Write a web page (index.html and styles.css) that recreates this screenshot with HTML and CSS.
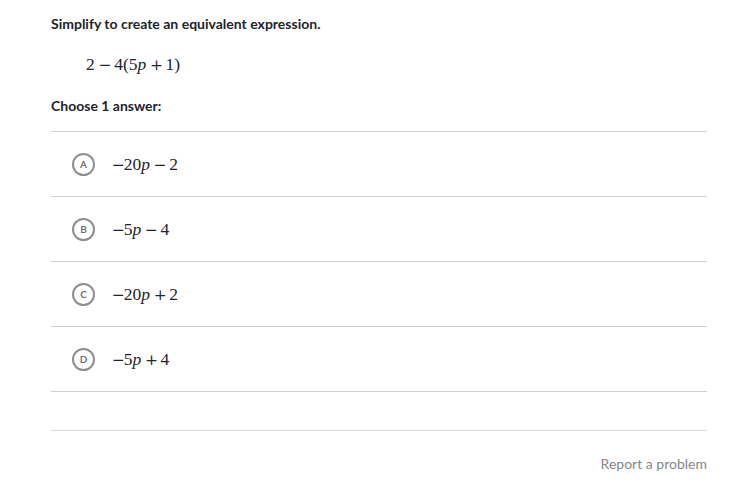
FILE: index.html
```html
<!DOCTYPE html>
<html>
<head>
<meta charset="utf-8">
<link rel="stylesheet" href="styles.css">
</head>
<body>
<div class="page">
  <div class="title">Simplify to create an equivalent expression.</div>
  <div class="expr m">2<span class="op">−</span>4(5<i>p</i><span class="op">+</span>1)</div>
  <div class="choose">Choose 1 answer:</div>
  <ul class="choices">
    <li class="choice"><span class="letter">A</span><span class="m"><span class="un">−</span>20<i>p</i><span class="op">−</span>2</span></li>
    <li class="choice"><span class="letter">B</span><span class="m"><span class="un">−</span>5<i>p</i><span class="op">−</span>4</span></li>
    <li class="choice"><span class="letter">C</span><span class="m"><span class="un">−</span>20<i>p</i><span class="op">+</span>2</span></li>
    <li class="choice"><span class="letter">D</span><span class="m"><span class="un">−</span>5<i>p</i><span class="op">+</span>4</span></li>
  </ul>
  <div class="spacer"></div>
  <div class="footer"><span class="report">Report a problem</span></div>
</div>
</body>
</html>
```
FILE: styles.css
```css
html, body {
  margin: 0;
  padding: 0;
  background: #fff;
}
.page {
  width: 656px;
  margin-left: 51px;
  padding-top: 14px;
  font-family: Lato, "Liberation Sans", sans-serif;
  color: #21242c;
}
.title {
  font-size: 14px;
  font-weight: bold;
  line-height: 20px;
  height: 20px;
}
.m {
  font-family: "Liberation Serif", "DejaVu Serif", serif;
  font-size: 17.5px;
  line-height: 22px;
  color: #21242c;
}
.m i {
  font-style: italic;
}
.op, .un {
  display: inline-block;
  width: 0.75em;
  text-align: center;
  font-family: "DejaVu Serif", serif;
  font-size: 15.5px;
  line-height: 22px;
}
.op {
  margin: 0 0.25em;
}
.expr {
  padding-left: 35px;
  margin-top: 19px;
  height: 22px;
}
.choose {
  margin-top: 21px;
  font-size: 14px;
  font-weight: bold;
  line-height: 20px;
  height: 20px;
}
.choices {
  list-style: none;
  margin: 15px 0 0;
  padding: 0;
  border-top: 1px solid #cfcfcf;
}
.choice {
  display: flex;
  align-items: center;
  height: 64px;
  border-bottom: 1px solid #cfcfcf;
  padding-left: 21px;
}
.letter {
  width: 19px;
  height: 19px;
  border: 2px solid #8d8e90;
  border-radius: 50%;
  display: flex;
  align-items: center;
  justify-content: center;
  font-size: 10px;
  font-weight: bold;
  color: #6f7175;
  margin-right: 17px;
  flex: none;
}
.spacer {
  height: 38px;
  border-bottom: 1px solid #dcdcdc;
}
.footer {
  display: flex;
  justify-content: flex-end;
  padding-top: 23px;
}
.report {
  font-size: 14px;
  color: #85878a;
  line-height: 20px;
}
```
